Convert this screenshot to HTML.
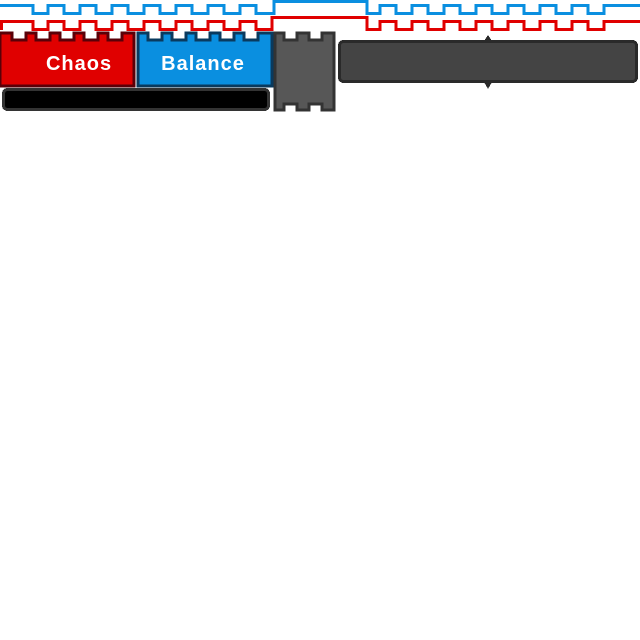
<!DOCTYPE html><html><head><style>html,body{margin:0;padding:0;background:#fff;width:640px;height:640px;overflow:hidden}</style></head><body>
<svg width="640" height="640" xmlns="http://www.w3.org/2000/svg" shape-rendering="crispEdges">
<polyline fill="none" stroke="#0a8fe0" stroke-width="3" points="0,5.5 33,5.5 33,13.5 48,13.5 48,5.5 64,5.5 64,13.5 80,13.5 80,5.5 96,5.5 96,13.5 112,13.5 112,5.5 128,5.5 128,13.5 144,13.5 144,5.5 160,5.5 160,13.5 176,13.5 176,5.5 192,5.5 192,13.5 208,13.5 208,5.5 224,5.5 224,13.5 240,13.5 240,5.5 256,5.5 256,13.5 274,13.5 274,1.5 367,1.5 367,13.5 380,13.5 380,5.5 396,5.5 396,13.5 412,13.5 412,5.5 428,5.5 428,13.5 444,13.5 444,5.5 460,5.5 460,13.5 476,13.5 476,5.5 492,5.5 492,13.5 508,13.5 508,5.5 524,5.5 524,13.5 540,13.5 540,5.5 556,5.5 556,13.5 572,13.5 572,5.5 588,5.5 588,13.5 604,13.5 604,5.5 640,5.5"/>
<polyline fill="none" stroke="#e00000" stroke-width="3" points="1.5,30 1.5,21.5 33,21.5 33,29.5 48,29.5 48,21.5 64,21.5 64,29.5 80,29.5 80,21.5 96,21.5 96,29.5 112,29.5 112,21.5 128,21.5 128,29.5 144,29.5 144,21.5 160,21.5 160,29.5 176,29.5 176,21.5 192,21.5 192,29.5 208,29.5 208,21.5 224,21.5 224,29.5 240,29.5 240,21.5 256,21.5 256,29.5 272,29.5 272,17.5 367,17.5 367,29.5 380,29.5 380,21.5 396,21.5 396,29.5 412,29.5 412,21.5 428,21.5 428,29.5 444,29.5 444,21.5 460,21.5 460,29.5 476,29.5 476,21.5 492,21.5 492,29.5 508,29.5 508,21.5 524,21.5 524,29.5 540,29.5 540,21.5 556,21.5 556,29.5 572,29.5 572,21.5 588,21.5 588,29.5 604,29.5 604,21.5 640,21.5"/>
<path d="M0,33 H12 V40 H26 V33 H36 V40 H50 V33 H60 V40 H74 V33 H84 V40 H98 V33 H108 V40 H122 V33 H134 V86 H0 Z" fill="#e00000" stroke="#5a0008" stroke-width="3"/>
<path d="M138,33 H148 V40 H162 V33 H172 V40 H186 V33 H196 V40 H210 V33 H220 V40 H234 V33 H244 V40 H258 V33 H272 V86 H138 Z" fill="#0a8fe0" stroke="#0a3a5e" stroke-width="3"/>
<text x="79" y="70" fill="#fff" font-family="Liberation Sans, sans-serif" font-weight="bold" font-size="20" text-anchor="middle" letter-spacing="1">Chaos</text>
<text x="203" y="70" fill="#fff" font-family="Liberation Sans, sans-serif" font-weight="bold" font-size="20" text-anchor="middle" letter-spacing="1">Balance</text>
<rect x="3.5" y="89.5" width="265" height="20" rx="4" fill="#000" stroke="#333" stroke-width="3"/>
<path d="M275,33 H284 V40 H297 V33 H309 V40 H322 V33 H334 V110 H322 V104 H309 V110 H297 V104 H284 V110 H275 Z" fill="#575757" stroke="#333" stroke-width="3"/>
<rect x="339.5" y="41.5" width="297" height="40" rx="4" fill="#444" stroke="#2a2a2a" stroke-width="3"/>
<path d="M484,41 L488,35 L492,41 Z M484,82 L488,89 L492,82 Z" fill="#2a2a2a"/>
</svg>
</body></html>
